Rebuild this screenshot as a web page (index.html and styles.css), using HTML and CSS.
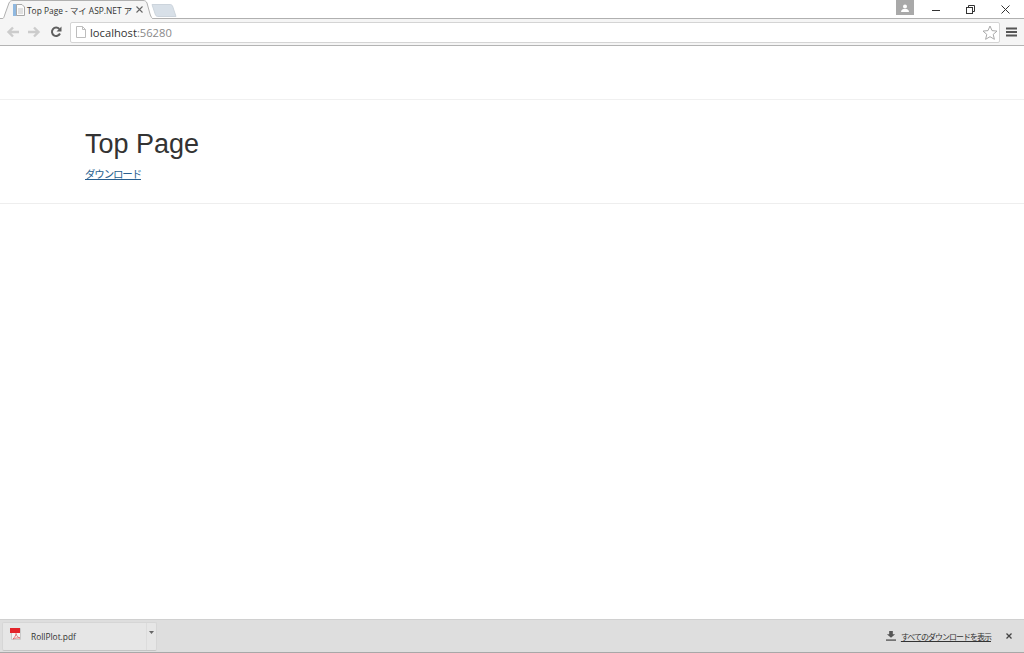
FILE: index.html
```html
<!DOCTYPE html>
<html lang="ja">
<head>
<meta charset="utf-8">
<title>Top Page - マイ ASP.NET アプリケーション</title>
<link rel="stylesheet" href="styles.css">
</head>
<body>
<div class="browser">
  <header class="chrome">
    <div class="tabstrip">
      <div class="tab">
        <svg class="tab-shape" width="154" height="19" viewBox="0 0 154 19"><path d="M0.5 19 C4 19 4 17 5 14 L9 3 C10 1 11 0.5 13 0.5 H143 C145 0.5 146 1 147 3 L150 14 C151 17 152 19 154 19" fill="#f5f5f5" stroke="#b0b0b0"/></svg>
        <svg class="favicon" width="12" height="12" viewBox="0 0 12 12"><rect x="0" y="0" width="5" height="12" fill="#8fb8e0"/><path d="M3.500 .5H9L11.500 3V11.500H3.500Z" fill="#fbfbfb" stroke="#a8a8a8"/><path d="M5 5h5M5 7h5M5 9h5" stroke="#c4c4c4"/></svg>
        <span class="tab-title">Top Page - マイ ASP.NET ア</span>
        <svg class="tab-close" width="7" height="7" viewBox="0 0 7 7"><path d="M.5 .5l6 6M6.500 .5l-6 6" stroke="#666" stroke-width="1.100"/></svg>
      </div>
      <svg class="new-tab" width="26" height="13" viewBox="0 0 26 13"><path d="M1 .5H19C20 .5 21 1 21.500 2L25 12.500H7C6 12.500 5 12 4.500 11Z" fill="#d8e0e8" stroke="#ccd4dc"/></svg>
      <div class="window-controls">
        <div class="avatar"><svg width="10" height="8" viewBox="0 0 10 8"><circle cx="5" cy="2.500" r="2" fill="#fff"/><path d="M1 8C1 5.500 3 5 5 5S9 5.500 9 8Z" fill="#fff"/></svg></div>
        <svg class="win-btn win-min" width="9" height="9" viewBox="0 0 9 9"><path d="M0 5.500H8" stroke="#333" stroke-width="1"/></svg>
        <svg class="win-btn win-restore" width="9" height="9" viewBox="0 0 9 9"><path d="M2.500 2V.5H8.500V6.500H7" fill="none" stroke="#333"/><rect x=".5" y="2.500" width="6" height="6" fill="none" stroke="#333"/></svg>
        <svg class="win-btn win-close" width="9" height="9" viewBox="0 0 9 9"><path d="M.5 .5l8 8M8.500 .5l-8 8" stroke="#333" stroke-width="1"/></svg>
      </div>
    </div>
    <div class="toolbar">
      <svg class="nav-icon nav-back" width="14" height="12" viewBox="0 0 14 12"><path d="M13 6H3M7 1.500L2.500 6L7 10.500" fill="none" stroke="#cccccc" stroke-width="2.400"/></svg>
      <svg class="nav-icon nav-forward" width="14" height="12" viewBox="0 0 14 12"><path d="M1 6H11M7 1.500L11.500 6L7 10.500" fill="none" stroke="#cccccc" stroke-width="2.400"/></svg>
      <svg class="nav-icon nav-reload" width="12" height="12" viewBox="0 0 12 12"><path d="M10 7.500A4.200 4.200 0 1 1 9.300 3" fill="none" stroke="#5f5f5f" stroke-width="2"/><path d="M11.500 .5V5.500H6.500Z" fill="#5f5f5f"/></svg>
      <div class="omnibox">
        <svg class="page-icon" width="10" height="12" viewBox="0 0 10 12"><path d="M.5 .5H6.500L9.500 3.500V11.500H.5Z" fill="#fff" stroke="#bdbdbd"/><path d="M6.500 .5V3.500H9.500" fill="none" stroke="#bdbdbd"/></svg>
        <span class="url"><span class="host">localhost</span>:56280</span>
        <svg class="star" width="16" height="15" viewBox="0 0 16 15"><path d="M8 1L10 5.600L15 6.100L11.200 9.400L12.400 14.300L8 11.700L3.600 14.300L4.800 9.400L1 6.100L6 5.600Z" fill="#fff" stroke="#a9a9a9"/></svg>
      </div>
      <svg class="menu-icon" width="11" height="10" viewBox="0 0 11 10"><path d="M0 1.500H11M0 5H11M0 8.500H11" stroke="#555" stroke-width="2"/></svg>
    </div>
  </header>
  <main class="page">
    <nav class="navbar"></nav>
    <section class="content">
      <h1 class="page-title">Top Page</h1>
      <a class="download-link" href="#">ダウンロード</a>
    </section>
  </main>
  <footer class="shelf">
    <div class="shelf-item">
      <div class="item-main">
        <svg class="pdf-icon" width="12" height="14" viewBox="0 0 12 14"><path d="M1.500 .5H10.500V11.500H1.500Z" fill="#f4f4f4" stroke="#c9c9c9"/><rect x="0" y="0" width="10" height="5" fill="#e3242b"/><path d="M3 11C5 9 6 7 6 5.500C6.500 8 8 9.500 10 10C7.500 9.800 5 10 3 11Z" fill="none" stroke="#e0575b" stroke-width=".8"/></svg>
        <span class="item-name">RollPlot.pdf</span>
      </div>
      <div class="item-menu"><svg width="5" height="3" viewBox="0 0 5 3"><path d="M0 0H5L2.500 3Z" fill="#666"/></svg></div>
    </div>
    <div class="shelf-actions">
      <svg class="dl-icon" width="10" height="10" viewBox="0 0 11 11"><path d="M3.500 0H7.500V3.500H10L5.500 7.500L1 3.500H3.500Z" fill="#555"/><path d="M0 10H11" stroke="#555" stroke-width="1.500"/></svg>
      <a class="show-all" href="#">すべてのダウンロードを表示</a>
      <svg class="shelf-close" width="6" height="6" viewBox="0 0 6 6"><path d="M.5 .5l5 5M5.500 .5l-5 5" stroke="#444" stroke-width="1.300"/></svg>
    </div>
  </footer>
</div>
</body>
</html>
```
FILE: styles.css
```css
* { box-sizing: border-box; }
html, body { margin: 0; height: 100%; overflow: hidden; }
body { background: #fff; font-family: "Liberation Sans", "Noto Sans CJK JP", sans-serif; }
.browser { display: flex; flex-direction: column; height: 653px; width: 1024px; }

.chrome { flex: none; height: 46px; background: #f5f5f5; border-bottom: 1px solid #b4b4b4; }
.tabstrip { display: flex; align-items: flex-start; height: 19px; background: #fff; border-bottom: 1px solid #b0b0b0; position: relative; }
.tab { position: relative; width: 154px; height: 19px; display: flex; align-items: center; padding: 0 0 0 13px; z-index: 1; flex: none; }
.tab-shape { position: absolute; left: 0; top: 0; }
.favicon { position: relative; flex: none; margin-right: 2px; }
.tab-title { position: relative; font: 8.400px "Open Sans", "Noto Sans CJK JP", sans-serif; color: #333; width: 106px; white-space: nowrap; }
.tab-close { position: relative; margin-left: 3px; }
.new-tab { flex: none; margin: 4px 0 0 -3px; }
.window-controls { margin-left: auto; display: flex; align-items: flex-start; }
.avatar { width: 18px; height: 15px; background: #a9a9a9; display: flex; justify-content: center; align-items: center; margin-right: 18px; }
.win-btn { margin-top: 5px; }
.win-min { margin-right: 25px; }
.win-restore { margin-right: 26px; }
.win-close { margin-right: 14px; }

.toolbar { height: 26px; display: flex; align-items: center; padding: 0 7px 0 6px; }
.nav-icon { flex: none; }
.nav-back { margin-right: 7px; }
.nav-forward { margin-right: 9px; }
.omnibox { flex: 1; height: 21px; margin: 0 6px 0 8px; background: #fff; border: 1px solid #d4d4d4; border-radius: 2px; display: flex; align-items: center; padding: 0 1px 0 5px; }
.page-icon { flex: none; margin-right: 4px; }
.url { font: 11.200px "Open Sans", sans-serif; color: #8a8a8a; flex: 1; }
.host { color: #333; }
.menu-icon { flex: none; }

.page { flex: 1; min-height: 0; background: #fff; }
.navbar { height: 54px; border-bottom: 1px solid #f0f0f0; }
.content { height: 104px; padding: 29px 85px 0; border-bottom: 1px solid #eeeeee; }
.page-title { margin: 0; font-size: 27px; font-weight: 400; line-height: 30px; color: #333; }
.download-link { display: inline-block; margin-top: 7px; font-size: 10.500px; letter-spacing: -1.170px; line-height: 16px; color: #285f8f; text-decoration: underline; }

.shelf { flex: none; height: 34px; background: #dedede; border-top: 1px solid #d0d0d0; border-bottom: 1px solid #a8a8a8; display: flex; align-items: center; justify-content: space-between; padding: 0 12px 0 2px; }
.shelf-item { width: 155px; height: 29px; background: #e6e6e6; border: 1px solid #d6d6d6; border-bottom-color: #c4c4c4; border-radius: 2px; display: flex; }
.item-main { flex: 1; display: flex; align-items: center; padding-left: 7px; }
.pdf-icon { flex: none; margin: -3px 9px 0 0; }
.item-name { font: 8.400px "Open Sans", sans-serif; color: #333; }
.item-menu { width: 10px; border-left: 1px solid #dcdcdc; display: flex; justify-content: center; padding-top: 8px; }
.item-menu svg { display: block; }
.shelf-actions { display: flex; align-items: center; }
.dl-icon { flex: none; margin-right: 5px; }
.show-all { font: 8px "Noto Sans CJK JP", sans-serif; letter-spacing: -1px; color: #333; text-decoration: underline; }
.shelf-close { flex: none; margin-left: 15px; }
```
